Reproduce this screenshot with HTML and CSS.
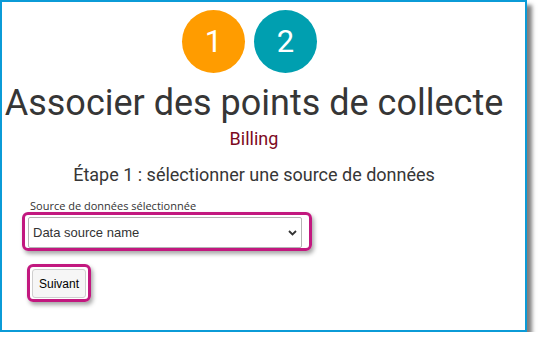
FILE: index.html
```html
<!DOCTYPE html>
<html lang="fr">
<head>
    <meta charset="UTF-8">
    <meta name="viewport" content="width=device-width, initial-scale=1.0">
    <title>Associer des points de collecte</title>
    <link rel="stylesheet" href="styles.css">
</head>
<body>
<div class="frame">
    <div class="steps">
        <span class="step step-current">1</span>
        <span class="step step-next">2</span>
    </div>
    <h1 class="title">Associer des points de collecte</h1>
    <div class="subtitle">Billing</div>
    <h2 class="step-title">Étape 1 : sélectionner une source de données</h2>

    <div class="form">
        <label class="field-label" for="source">Source de données sélectionnée</label>
        <div class="highlight highlight-select">
            <div class="select-wrap">
                <select id="source" class="select">
                    <option>Data source name</option>
                </select>
                <svg class="chevron" width="9" height="6" viewBox="0 0 9 6">
                    <path d="M1 1 L4.5 4.5 L8 1" fill="none" stroke="#333" stroke-width="1.8"/>
                </svg>
            </div>
        </div>
        <div class="highlight highlight-button">
            <button class="button">Suivant</button>
        </div>
    </div>
</div>
</body>
</html>
```

FILE: styles.css
```css
body {
    margin: 0;
    background-color: #ffffff;
    font-family: Roboto, Arial, sans-serif;
}
.frame {
    box-sizing: border-box;
    width: 527px;
    height: 332px;
    border: 2px solid #0b9bd7;
    padding-right: 19px;
    background-color: #ffffff;
    box-shadow: 5px 5px 4px rgba(0, 0, 0, 0.5);
}
.steps {
    display: flex;
    justify-content: center;
    padding-top: 8px;
}
.step {
    display: flex;
    justify-content: center;
    align-items: center;
    width: 63px;
    height: 63px;
    margin-right: 9px;
    border-radius: 50%;
    color: #ffffff;
    font-size: 31px;
}
.step-current {
    background-color: #ff9c00;
}
.step-next {
    background-color: #009fb0;
}
.title {
    margin: 10px 0 0;
    font-size: 36px;
    line-height: 40px;
    font-weight: 400;
    color: #363636;
    text-align: center;
}
.subtitle {
    margin-top: 6px;
    font-size: 18px;
    line-height: 20px;
    color: #7d0a1e;
    text-align: center;
}
.step-title {
    margin: 15px 0 0;
    font-size: 18px;
    line-height: 22px;
    font-weight: 400;
    color: #363636;
    text-align: center;
}
.form {
    padding-left: 20px;
    margin-top: 14px;
}
.field-label {
    display: block;
    margin-left: 8px;
    font-family: "Open Sans", Arial, sans-serif;
    font-size: 11px;
    line-height: 12px;
    color: #333333;
}
.highlight {
    display: inline-block;
    border: 3px solid #c2187f;
    border-radius: 6px;
    box-shadow: 2px 3px 4px rgba(0, 0, 0, 0.35);
}
.highlight-select {
    padding: 2px 7px 0 3px;
}
.highlight-button {
    display: block;
    width: fit-content;
    margin: 13px 0 0 5px;
    padding: 2px 2px 1px 2px;
}
.select-wrap {
    position: relative;
}
.select {
    display: block;
    box-sizing: border-box;
    width: 274px;
    height: 31px;
    padding: 0 20px 0 4px;
    border: 1px solid #b4b4b4;
    border-radius: 2px;
    background-color: #ffffff;
    font-family: Arial, sans-serif;
    font-size: 13px;
    color: #333333;
    appearance: none;
    -webkit-appearance: none;
}
.chevron {
    position: absolute;
    right: 5px;
    top: 13px;
}
.button {
    display: block;
    box-sizing: border-box;
    width: 54px;
    height: 29px;
    padding: 0;
    border: 1px solid #cfcfcf;
    border-radius: 3px;
    background-color: #f6f6f6;
    font-family: Arial, sans-serif;
    font-size: 12px;
    color: #000000;
}
```
